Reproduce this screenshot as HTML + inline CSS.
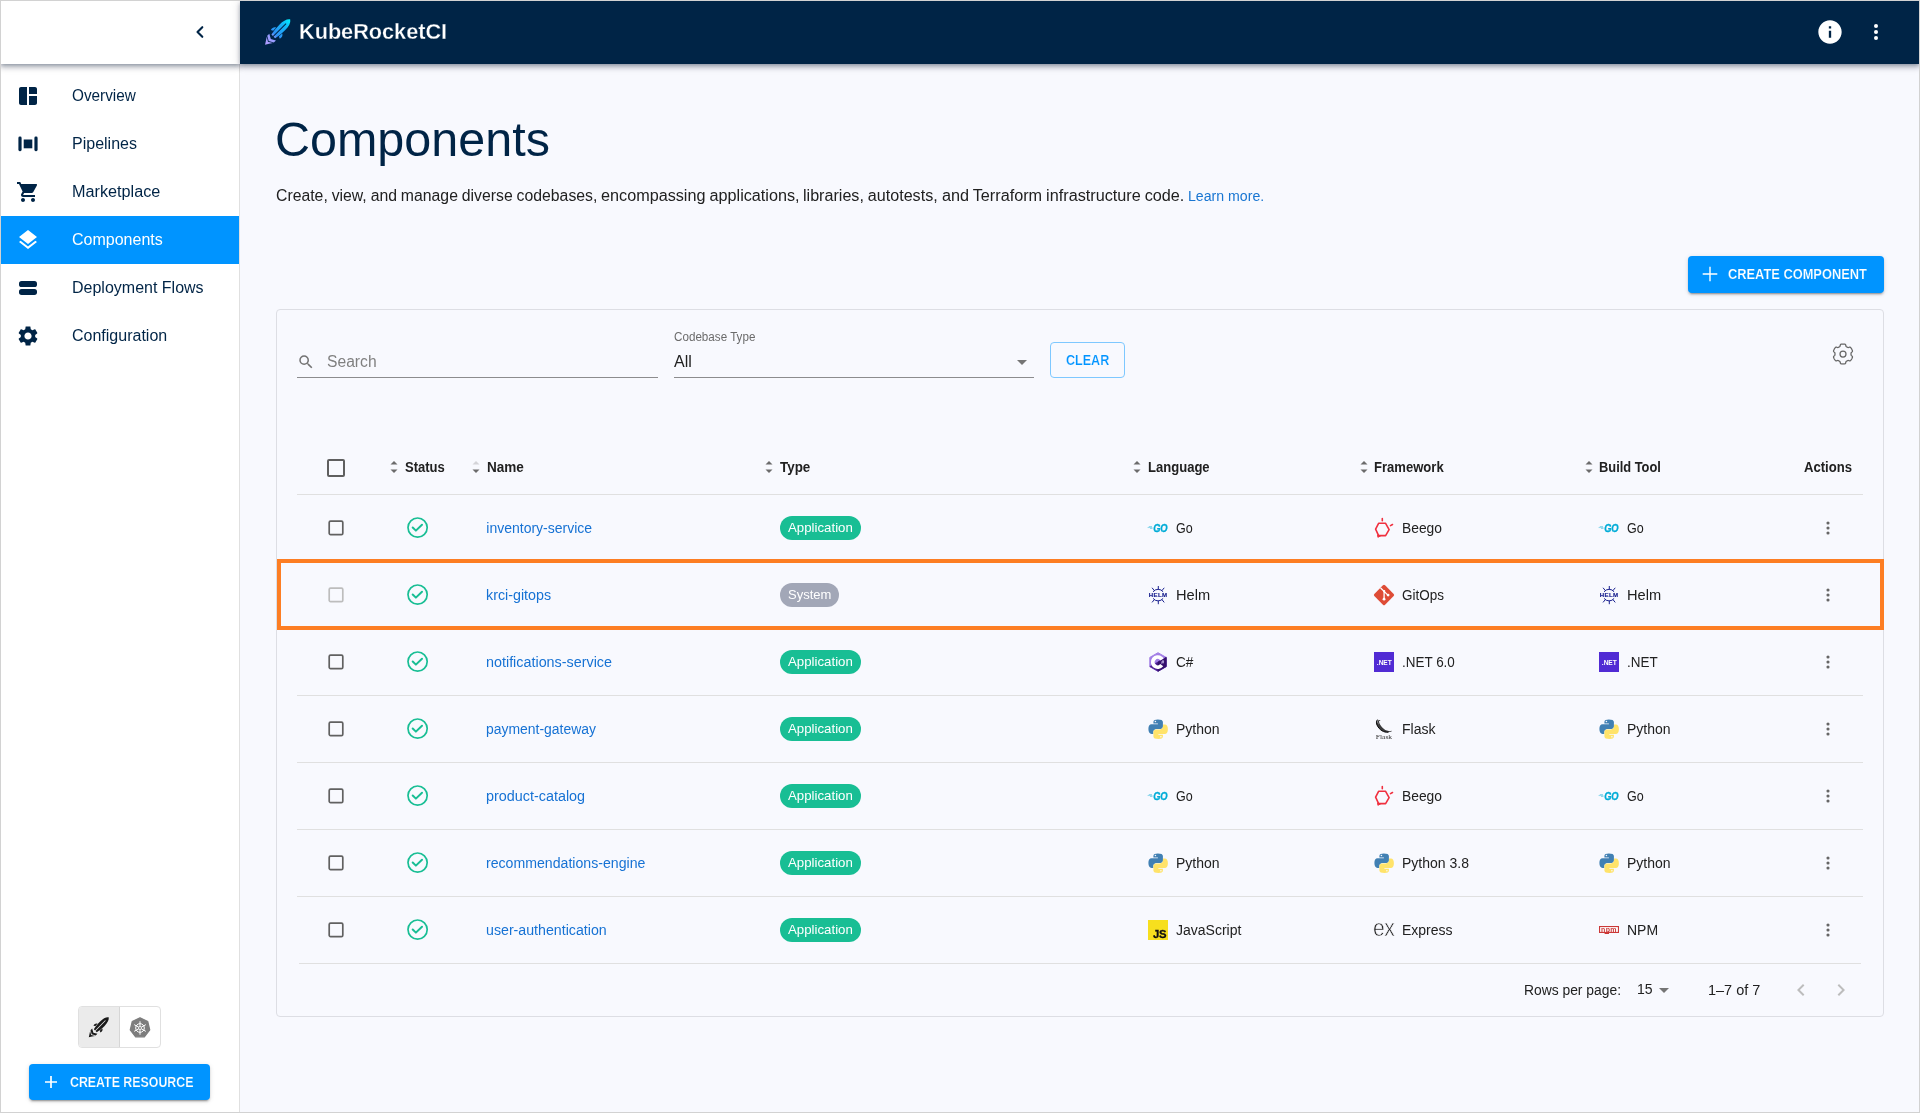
<!DOCTYPE html>
<html lang="en">
<head>
<meta charset="utf-8">
<title>KubeRocketCI - Components</title>
<style>
*{box-sizing:border-box;margin:0;padding:0}
html,body{width:1920px;height:1113px;overflow:hidden;background:#f8f9fe}
body{font-family:"Liberation Sans",sans-serif;color:#212121;-webkit-font-smoothing:antialiased}
#app{position:relative;width:1920px;height:1113px;overflow:hidden;background:#f8f9fe;will-change:transform}
.abs{position:absolute}
.t{position:absolute;white-space:nowrap;line-height:20px;transform-origin:0 50%;transform:scaleX(var(--k,1))}
/* sidebar */
.side{position:absolute;left:0;top:0;width:240px;height:1113px;background:#fff;border-right:1px solid #e0e0e0}
.sidehead{position:absolute;left:0;top:0;width:240px;height:64px;background:#fff;box-shadow:0 2px 4px -1px rgba(0,20,45,.3),0 4px 5px 0 rgba(0,20,45,.17),0 1px 10px 0 rgba(0,20,45,.13);z-index:3}
.nav{position:absolute;left:0;width:239px;height:48px}
.nav.active{background:#0094ff}
.nav .lbl{transform-origin:0 50%;transform:scaleX(var(--k,1));position:absolute;left:72px;top:14px;line-height:20px;font-size:16px;color:#002446;white-space:nowrap}
.nav.active .lbl{color:#fff}
.nav svg{position:absolute;left:16px;top:12px;width:24px;height:24px;fill:#002446}
.nav.active svg{fill:#fff}
/* topbar */
.top{position:absolute;left:240px;top:0;width:1680px;height:64px;background:#002446;box-shadow:0 2px 4px -1px rgba(0,20,45,.3),0 4px 5px 0 rgba(0,20,45,.17),0 1px 10px 0 rgba(0,20,45,.13);z-index:4}
/* main */
.card{position:absolute;left:276px;top:309px;width:1608px;height:708px;border:1px solid #dddee4;border-radius:4px;background:#f8f9fe}
.hl{position:absolute;left:277px;top:559px;width:1607px;height:71px;border:4px solid #fd7e23;z-index:5}
.hline{position:absolute;left:297px;width:1566px;height:1px;background:#e0e0e0}
.btn{position:absolute;background:#0094ff;color:#fff;border-radius:4px;font-weight:bold;font-size:14px;box-shadow:0 3px 1px -2px rgba(0,0,0,.2),0 2px 2px 0 rgba(0,0,0,.14),0 1px 5px 0 rgba(0,0,0,.12)}
.th{font-weight:bold;font-size:14px;color:#212121}
.td{font-size:14px;color:#212121}
.lnk{font-size:14px;color:#1672d4}
.chip{position:absolute;height:24px;border-radius:12px;background:#18be94;color:#fff;font-size:13px;line-height:24px;padding:0 8px;white-space:nowrap}
.chip.sys{background:#a2a7b7}
.cb{position:absolute;width:16px;height:16px;border:2px solid #5f5f5f;border-radius:2px}
.ic{position:absolute;overflow:visible}
.cb.dis{border-color:#bdbdbd}
.ds{top:186px;font-size:16px;color:#212121;word-spacing:-.5px}
.frame{position:absolute;left:0;top:0;width:1920px;height:1113px;border:1px solid #d2d2d2;z-index:20;pointer-events:none}
</style>
</head>
<body>
<div id="app">

<!-- SIDEBAR -->
<div class="side">
  <div class="sidehead">
    <svg class="abs" style="left:188px;top:20px" width="24" height="24" viewBox="0 0 24 24"><path fill="none" stroke="#002446" stroke-width="2.100" stroke-linecap="round" stroke-linejoin="round" d="M14.300 7.200 9.500 12l4.800 4.800"/></svg>
  </div>
  <div class="nav" style="top:72px"><svg viewBox="0 0 24 24"><path d="M11 21H5c-1.100 0-2-.9-2-2V5c0-1.100.9-2 2-2h6v18zm2 0h6c1.100 0 2-.9 2-2v-7h-8v9zm8-11V5c0-1.100-.9-2-2-2h-6v7h8z"/></svg><span class="lbl" style="--k:.957">Overview</span></div>
  <div class="nav" style="top:120px"><svg viewBox="0 0 24 24"><rect x="2.400" y="4.600" width="3.200" height="14.600" rx="1.400"/><rect x="7.700" y="7.500" width="8.600" height="8.800"/><rect x="18.400" y="4.600" width="3.200" height="14.600" rx="1.400"/></svg><span class="lbl">Pipelines</span></div>
  <div class="nav" style="top:168px"><svg viewBox="0 0 24 24"><path d="M7 18c-1.100 0-1.990.9-1.990 2S5.900 22 7 22s2-.9 2-2-.9-2-2-2zM1 2v2h2l3.600 7.590-1.350 2.450c-.16.280-.250.610-.250.960 0 1.100.9 2 2 2h12v-2H7.420c-.14 0-.250-.11-.250-.250l.030-.12.900-1.630h7.450c.750 0 1.410-.41 1.750-1.030l3.580-6.490A1.003 1.003 0 0 0 20 4H5.210l-.94-2H1zm16 16c-1.100 0-1.990.9-1.990 2s.89 2 1.990 2 2-.9 2-2-.9-2-2-2z"/></svg><span class="lbl" style="--k:1.014">Marketplace</span></div>
  <div class="nav active" style="top:216px;left:1px;width:238px"><svg viewBox="0 0 24 24" style="left:15px"><path d="m11.990 18.540-7.370-5.730L3 14.070l9 7 9-7-1.630-1.270-7.380 5.740zM12 16l7.360-5.730L21 9l-9-7-9 7 1.630 1.270L12 16z"/></svg><span class="lbl" style="left:71px">Components</span></div>
  <div class="nav" style="top:264px"><svg viewBox="0 0 24 24"><rect x="3" y="5.100" width="18" height="5.900" rx="2.600"/><rect x="3" y="13" width="18" height="5.900" rx="2.600"/></svg><span class="lbl">Deployment Flows</span></div>
  <div class="nav" style="top:312px"><svg viewBox="0 0 24 24"><path d="M19.140 12.940c.040-.3.060-.61.060-.94 0-.32-.020-.64-.070-.94l2.030-1.580c.18-.14.230-.41.120-.61l-1.920-3.320c-.12-.22-.37-.29-.59-.22l-2.390.96c-.5-.38-1.030-.7-1.620-.94l-.36-2.540c-.040-.24-.24-.41-.48-.41h-3.840c-.24 0-.43.170-.47.410l-.36 2.540c-.59.240-1.130.57-1.620.94l-2.390-.96c-.22-.080-.47 0-.59.220L2.740 8.870c-.12.210-.080.470.12.610l2.030 1.580c-.050.3-.090.630-.090.940s.020.640.070.94l-2.030 1.580c-.18.140-.23.410-.12.610l1.920 3.320c.12.220.37.290.59.220l2.390-.96c.5.380 1.030.7 1.620.94l.36 2.540c.050.240.24.410.48.410h3.840c.24 0 .44-.17.470-.41l.36-2.540c.59-.24 1.130-.56 1.620-.94l2.390.96c.22.080.47 0 .59-.22l1.920-3.320c.12-.22.070-.47-.12-.61l-2.010-1.580zM12 15.600c-1.980 0-3.600-1.620-3.600-3.600s1.620-3.600 3.600-3.600 3.600 1.620 3.600 3.600-1.620 3.600-3.600 3.600z"/></svg><span class="lbl">Configuration</span></div>
  <div class="abs" style="left:78px;top:1006px;width:83px;height:42px;border:1px solid #e0e0e0;border-radius:4px;background:#fff;overflow:hidden">
    <div class="abs" style="left:0;top:0;width:41px;height:40px;background:#ebebeb;border-right:1px solid #d6d6d6"></div>
    <svg class="abs" style="left:0;top:0" width="40" height="40" viewBox="0 0 40 40"><g transform="translate(20 20) rotate(45) scale(.79)"><path fill="#1a1a1a" d="M0-17.400C2.600-15.600 4-11.500 4-6C4-1 3.300 3.500 2.600 6.600H.5V-11.500H-.5V6.600H-2.600C-3.300 3.500-4-1-4-6C-4-11.500-2.600-15.600 0-17.400zM-4.300-1.700C-6.300-1-6.900 1.400-6.300 3.700L-4 2.700zM4.300-1.700C6.300-1 6.900 1.400 6.300 3.700L4 2.700zM-4.700 7.500L0 10.100 4.700 7.500V10.500L0 13.100-4.700 10.500zM-4.400 11.500L0 14.100 4.400 11.500 2.200 14.800 0 18.250-2.200 14.800z"/></g></svg>
    <svg class="abs" style="left:50px;top:10px" width="22" height="22" viewBox="0 0 22 22"><path fill="#7d7d7d" d="M11 .8l7.800 3.750 1.950 8.450-5.400 6.800H6.650l-5.400-6.800L3.200 4.550z" stroke="#7d7d7d" stroke-width="1.200" stroke-linejoin="round"/><g fill="none" stroke="#fff" stroke-width="1"><circle cx="11" cy="11" r="4.300"/><path d="M11 4.300v13.400M5.200 7.650l11.600 6.700M5.200 14.350l11.600-6.700"/></g><circle cx="11" cy="11" r="1.500" fill="#7d7d7d" stroke="#fff" stroke-width=".8"/></svg>
  </div>
  <div class="btn" style="left:29px;top:1064px;width:181px;height:36px">
    <svg class="abs" style="left:12px;top:8px" width="20" height="20" viewBox="0 0 20 20"><path d="M10 4v12M4 10h12" stroke="#fff" stroke-width="1.700" fill="none"/></svg>
    <span class="t" style="left:40.800px;top:8px;font-size:14px;-webkit-text-stroke:.2px #0094ff;--k:.883">CREATE RESOURCE</span>
  </div>
</div>

<!-- TOPBAR -->
<div class="top">
  <svg class="abs" style="left:17px;top:12px" width="40" height="40" viewBox="0 0 40 40">
    <defs><linearGradient id="rg" x1="0" y1="1" x2="0" y2="0"><stop offset="0" stop-color="#b69cff"/><stop offset=".32" stop-color="#8f9dff"/><stop offset=".4" stop-color="#2f8ff5"/><stop offset=".75" stop-color="#12b5f7"/><stop offset="1" stop-color="#00f0ff"/></linearGradient></defs>
    <g transform="translate(20.950 19.750) rotate(45)">
      <path fill="url(#rg)" d="M0-17.400C2.600-15.600 4-11.500 4-6C4-1 3.300 3.500 2.600 6.600H.5V-11.500H-.5V6.600H-2.600C-3.300 3.500-4-1-4-6C-4-11.500-2.600-15.600 0-17.400zM-4.300-1.700C-6.300-1-6.900 1.400-6.300 3.700L-4 2.700zM4.300-1.700C6.300-1 6.900 1.400 6.300 3.700L4 2.700zM-4.700 7.500L0 10.100 4.700 7.500V10.500L0 13.100-4.700 10.500zM-4.400 11.500L0 14.100 4.400 11.500 2.200 14.800 0 18.250-2.200 14.800z"/>
    </g>
  </svg>
  <span class="t" style="left:58.500px;top:20px;font-size:22px;line-height:24px;color:#fff;font-weight:bold;-webkit-text-stroke:.3px #002446;--k:.985">KubeRocketCI</span>
  <svg class="abs" style="left:1576px;top:18px" width="28" height="28" viewBox="0 0 24 24"><path fill="#fff" d="M12 2C6.480 2 2 6.480 2 12s4.480 10 10 10 10-4.480 10-10S17.520 2 12 2zm1 15h-2v-6h2v6zm0-8h-2V7h2v2z"/></svg>
  <svg class="abs" style="left:1624px;top:20px" width="24" height="24" viewBox="0 0 24 24" fill="#fff"><circle cx="12" cy="6" r="2"/><circle cx="12" cy="12" r="2"/><circle cx="12" cy="18" r="2"/></svg>
</div>

<!-- MAIN -->
<div class="t" style="left:274.700px;top:112px;font-size:48px;line-height:56px;color:#002446;--k:1.01">Components</div>
<div class="t ds" id="dA" style="left:276.00px;--k:0.9866">Create, view, and manage diverse codebases,</div>
<div class="t ds" id="dB" style="left:601.30px;--k:1.0128">encompassing applications,</div>
<div class="t ds" id="dC" style="left:802.60px;--k:1.0067">libraries, autotests,</div>
<div class="t ds" id="dD" style="left:942.12px;--k:1.0132">and Terraform infrastructure code.</div>
<div class="t" style="left:1188px;top:186px;font-size:14px;color:#1976d2;--k:1.01">Learn more.</div>


<!-- CREATE COMPONENT -->
<div class="btn" style="left:1688px;top:256px;width:196px;height:37px">
  <svg class="abs" style="left:12px;top:8px" width="20" height="20" viewBox="0 0 20 20"><path d="M10 2.700v14.600M2.700 10h14.600" stroke="#fff" stroke-width="1.400" fill="none"/></svg>
  <span class="t" style="left:40px;top:8px;font-size:14px;-webkit-text-stroke:.2px #0094ff;--k:.917">CREATE COMPONENT</span>
</div>

<div class="card"></div>

<!-- FILTER -->
<svg class="abs" style="left:297px;top:353px" width="18" height="18" viewBox="0 0 24 24"><path fill="#737373" d="M15.500 14h-.79l-.28-.27A6.471 6.471 0 0 0 16 9.500 6.500 6.500 0 1 0 9.500 16c1.610 0 3.090-.59 4.230-1.570l.27.28v.79l5 4.990L20.490 19l-4.990-5zm-6 0C7.010 14 5 11.990 5 9.500S7.010 5 9.500 5 14 7.010 14 9.500 11.990 14 9.500 14z"/></svg>
<div class="t" style="left:326.500px;top:352.300px;font-size:16px;color:#808080;--k:.978">Search</div>
<div class="abs" style="left:297px;top:377px;width:361px;height:1px;background:#8c8c8e"></div>
<div class="t" style="left:674px;top:327px;font-size:12px;color:#6b6b6b;--k:.971">Codebase Type</div>
<div class="t" style="left:674px;top:352px;font-size:16px;color:#212121">All</div>
<svg class="abs" style="left:1017px;top:359.500px" width="10" height="5" viewBox="0 0 10 5"><path d="M0 0h10L5 5z" fill="#757575"/></svg>
<div class="abs" style="left:674px;top:377px;width:360px;height:1px;background:#8c8c8e"></div>
<div class="abs" style="left:1050px;top:342px;width:75px;height:36px;border:1px solid #7ec8ff;border-radius:4px"></div>
<div class="t" style="left:1066px;top:350px;font-size:14px;font-weight:bold;color:#0094ff;-webkit-text-stroke:.2px #f8f9fe;--k:.896">CLEAR</div>
<svg class="abs" style="left:1831px;top:342px" width="24" height="24" viewBox="0 0 24 24" fill="none" stroke="#666" stroke-width="1.250" stroke-linejoin="round"><path d="M12.00,2.00 L12.17,2.00 L12.35,2.01 L12.52,2.01 L12.70,2.03 L12.87,2.04 L13.05,2.06 L13.22,2.08 L13.39,2.10 L13.56,2.13 L13.73,2.17 L13.90,2.21 L14.07,2.27 L14.23,2.34 L14.38,2.45 L14.51,2.61 L14.63,2.84 L14.71,3.14 L14.77,3.47 L14.83,3.78 L14.89,4.05 L14.98,4.25 L15.07,4.40 L15.18,4.52 L15.29,4.61 L15.41,4.69 L15.53,4.77 L15.65,4.84 L15.77,4.91 L15.89,4.98 L16.01,5.05 L16.14,5.12 L16.26,5.19 L16.38,5.26 L16.50,5.33 L16.63,5.39 L16.76,5.45 L16.89,5.51 L17.05,5.54 L17.22,5.55 L17.44,5.52 L17.70,5.44 L18.00,5.33 L18.32,5.22 L18.62,5.15 L18.87,5.13 L19.08,5.17 L19.25,5.24 L19.39,5.34 L19.53,5.46 L19.65,5.58 L19.76,5.71 L19.88,5.85 L19.98,5.98 L20.09,6.12 L20.19,6.27 L20.29,6.41 L20.39,6.55 L20.48,6.70 L20.57,6.85 L20.66,7.00 L20.75,7.15 L20.83,7.31 L20.91,7.46 L20.99,7.62 L21.06,7.77 L21.13,7.93 L21.20,8.09 L21.27,8.26 L21.33,8.42 L21.38,8.59 L21.43,8.75 L21.46,8.93 L21.48,9.10 L21.46,9.29 L21.39,9.49 L21.24,9.70 L21.03,9.91 L20.78,10.13 L20.53,10.34 L20.33,10.53 L20.20,10.70 L20.12,10.86 L20.07,11.01 L20.05,11.15 L20.03,11.30 L20.03,11.44 L20.03,11.58 L20.03,11.72 L20.03,11.86 L20.03,12.00 L20.03,12.14 L20.03,12.28 L20.03,12.42 L20.03,12.56 L20.03,12.70 L20.05,12.85 L20.07,12.99 L20.12,13.14 L20.20,13.30 L20.33,13.47 L20.53,13.66 L20.78,13.87 L21.03,14.09 L21.24,14.30 L21.39,14.51 L21.46,14.71 L21.48,14.90 L21.46,15.07 L21.43,15.25 L21.38,15.41 L21.33,15.58 L21.27,15.74 L21.20,15.91 L21.13,16.07 L21.06,16.23 L20.99,16.38 L20.91,16.54 L20.83,16.69 L20.75,16.85 L20.66,17.00 L20.57,17.15 L20.48,17.30 L20.39,17.45 L20.29,17.59 L20.19,17.73 L20.09,17.88 L19.98,18.02 L19.88,18.15 L19.76,18.29 L19.65,18.42 L19.53,18.54 L19.39,18.66 L19.25,18.76 L19.08,18.83 L18.87,18.87 L18.62,18.85 L18.32,18.78 L18.00,18.67 L17.70,18.56 L17.44,18.48 L17.22,18.45 L17.05,18.46 L16.89,18.49 L16.76,18.55 L16.63,18.61 L16.50,18.67 L16.38,18.74 L16.26,18.81 L16.14,18.88 L16.01,18.95 L15.89,19.02 L15.77,19.09 L15.65,19.16 L15.53,19.23 L15.41,19.31 L15.29,19.39 L15.18,19.48 L15.07,19.60 L14.98,19.75 L14.89,19.95 L14.83,20.22 L14.77,20.53 L14.71,20.86 L14.63,21.16 L14.51,21.39 L14.38,21.55 L14.23,21.66 L14.07,21.73 L13.90,21.79 L13.73,21.83 L13.56,21.87 L13.39,21.90 L13.22,21.92 L13.05,21.94 L12.87,21.96 L12.70,21.97 L12.52,21.99 L12.35,21.99 L12.17,22.00 L12.00,22.00 L11.83,22.00 L11.65,21.99 L11.48,21.99 L11.30,21.97 L11.13,21.96 L10.95,21.94 L10.78,21.92 L10.61,21.90 L10.44,21.87 L10.27,21.83 L10.10,21.79 L9.93,21.73 L9.77,21.66 L9.62,21.55 L9.49,21.39 L9.37,21.16 L9.29,20.86 L9.23,20.53 L9.17,20.22 L9.11,19.95 L9.02,19.75 L8.93,19.60 L8.82,19.48 L8.71,19.39 L8.59,19.31 L8.47,19.23 L8.35,19.16 L8.23,19.09 L8.11,19.02 L7.99,18.95 L7.86,18.88 L7.74,18.81 L7.62,18.74 L7.50,18.67 L7.37,18.61 L7.24,18.55 L7.11,18.49 L6.95,18.46 L6.78,18.45 L6.56,18.48 L6.30,18.56 L6.00,18.67 L5.68,18.78 L5.38,18.85 L5.13,18.87 L4.92,18.83 L4.75,18.76 L4.61,18.66 L4.47,18.54 L4.35,18.42 L4.24,18.29 L4.12,18.15 L4.02,18.02 L3.91,17.88 L3.81,17.73 L3.71,17.59 L3.61,17.45 L3.52,17.30 L3.43,17.15 L3.34,17.00 L3.25,16.85 L3.17,16.69 L3.09,16.54 L3.01,16.38 L2.94,16.23 L2.87,16.07 L2.80,15.91 L2.73,15.74 L2.67,15.58 L2.62,15.41 L2.57,15.25 L2.54,15.07 L2.52,14.90 L2.54,14.71 L2.61,14.51 L2.76,14.30 L2.97,14.09 L3.22,13.87 L3.47,13.66 L3.67,13.47 L3.80,13.30 L3.88,13.14 L3.93,12.99 L3.95,12.85 L3.97,12.70 L3.97,12.56 L3.97,12.42 L3.97,12.28 L3.97,12.14 L3.97,12.00 L3.97,11.86 L3.97,11.72 L3.97,11.58 L3.97,11.44 L3.97,11.30 L3.95,11.15 L3.93,11.01 L3.88,10.86 L3.80,10.70 L3.67,10.53 L3.47,10.34 L3.22,10.13 L2.97,9.91 L2.76,9.70 L2.61,9.49 L2.54,9.29 L2.52,9.10 L2.54,8.93 L2.57,8.75 L2.62,8.59 L2.67,8.42 L2.73,8.26 L2.80,8.09 L2.87,7.93 L2.94,7.77 L3.01,7.62 L3.09,7.46 L3.17,7.31 L3.25,7.15 L3.34,7.00 L3.43,6.85 L3.52,6.70 L3.61,6.55 L3.71,6.41 L3.81,6.27 L3.91,6.12 L4.02,5.98 L4.12,5.85 L4.24,5.71 L4.35,5.58 L4.47,5.46 L4.61,5.34 L4.75,5.24 L4.92,5.17 L5.13,5.13 L5.38,5.15 L5.68,5.22 L6.00,5.33 L6.30,5.44 L6.56,5.52 L6.78,5.55 L6.95,5.54 L7.11,5.51 L7.24,5.45 L7.37,5.39 L7.50,5.33 L7.62,5.26 L7.74,5.19 L7.86,5.12 L7.99,5.05 L8.11,4.98 L8.23,4.91 L8.35,4.84 L8.47,4.77 L8.59,4.69 L8.71,4.61 L8.82,4.52 L8.93,4.40 L9.02,4.25 L9.11,4.05 L9.17,3.78 L9.23,3.47 L9.29,3.14 L9.37,2.84 L9.49,2.61 L9.62,2.45 L9.77,2.34 L9.93,2.27 L10.10,2.21 L10.27,2.17 L10.44,2.13 L10.61,2.10 L10.78,2.08 L10.95,2.06 L11.13,2.04 L11.30,2.03 L11.48,2.01 L11.65,2.01 L11.83,2.00Z"/><circle cx="12" cy="12" r="3"/></svg>

<!-- TABLE HEAD -->
<div class="cb" style="left:327px;top:459px;width:18px;height:18px"></div>
<svg class="abs" style="left:390px;top:460px" width="8" height="14" viewBox="0 0 8 14"><path d="M.5 4.500L4 1l3.500 3.500z" fill="#6b6b6b"/><path d="M.5 9.500L4 13l3.500-3.500z" fill="#6b6b6b"/></svg>
<div class="t th" style="left:405px;top:457px;--k:0.93">Status</div>
<svg class="abs" style="left:472px;top:460px" width="8" height="14" viewBox="0 0 8 14"><path d="M.5 4.500L4 1l3.500 3.500z" fill="#d4d4d8"/><path d="M.5 9.500L4 13l3.500-3.500z" fill="#6b6b6b"/></svg>
<div class="t th" style="left:487px;top:457px;--k:0.968">Name</div>
<svg class="abs" style="left:765px;top:460px" width="8" height="14" viewBox="0 0 8 14"><path d="M.5 4.500L4 1l3.500 3.500z" fill="#6b6b6b"/><path d="M.5 9.500L4 13l3.500-3.500z" fill="#6b6b6b"/></svg>
<div class="t th" style="left:780px;top:457px;--k:0.958">Type</div>
<svg class="abs" style="left:1133px;top:460px" width="8" height="14" viewBox="0 0 8 14"><path d="M.5 4.500L4 1l3.500 3.500z" fill="#6b6b6b"/><path d="M.5 9.500L4 13l3.500-3.500z" fill="#6b6b6b"/></svg>
<div class="t th" style="left:1148px;top:457px;--k:0.932">Language</div>
<svg class="abs" style="left:1360px;top:460px" width="8" height="14" viewBox="0 0 8 14"><path d="M.5 4.500L4 1l3.500 3.500z" fill="#6b6b6b"/><path d="M.5 9.500L4 13l3.500-3.500z" fill="#6b6b6b"/></svg>
<div class="t th" style="left:1374px;top:457px;--k:0.933">Framework</div>
<svg class="abs" style="left:1585px;top:460px" width="8" height="14" viewBox="0 0 8 14"><path d="M.5 4.500L4 1l3.500 3.500z" fill="#6b6b6b"/><path d="M.5 9.500L4 13l3.500-3.500z" fill="#6b6b6b"/></svg>
<div class="t th" style="left:1599px;top:457px;--k:0.918">Build Tool</div>
<div class="t th" style="left:1804px;top:457px;--k:.935">Actions</div>
<div class="hline" style="top:494px"></div>
<!-- TABLE ROWS -->
<svg class="abs" style="left:328px;top:520px" width="16" height="16" viewBox="0 0 16 16"><rect x="1.200" y="1.100" width="13.600" height="13.500" rx="1.400" fill="none" stroke="#616161" stroke-width="1.700"/></svg>
<svg class="abs" style="left:406px;top:516px" width="24" height="24" viewBox="0 0 24 24" fill="none" stroke="#18be94" stroke-width="1.700"><circle cx="11.600" cy="11.600" r="9.600"/><path d="M6.700 11.500l3.200 3.100 6.100-5.900" stroke-width="2" stroke-linecap="round" stroke-linejoin="round"/></svg>
<div class="t lnk" style="left:486.300px;top:518.3px;--k:1.0">inventory-service</div>
<div class="chip" style="left:780px;top:516px;width:81px"><span class="t" style="position:relative;display:inline-block;line-height:24px;--k:1.02">Application</span></div>
<svg class="ic" style="left:1148px;top:518px" width="20" height="20" viewBox="0 0 20 20"><g fill="none" stroke="#00acd7" stroke-width=".6" stroke-linecap="round" opacity=".7"><path d="M1.200 8.500h2.400M0 9.550h4M2.400 10.500h1.700"/></g><text transform="translate(5.300 13.900) scale(.86 1)" font-family="Liberation Sans, sans-serif" font-weight="bold" font-style="italic" font-size="10.900" letter-spacing="-.5" fill="#00acd7" stroke="#00acd7" stroke-width=".3">GO</text></svg>
<div class="t td" style="left:1176px;top:518px;--k:0.895">Go</div>
<svg class="ic" style="left:1374px;top:518px" width="20" height="20" viewBox="0 0 20 20"><g fill="none" stroke="#f0303f" stroke-width="1.600" stroke-linecap="round" stroke-linejoin="round"><path d="M4.600 5.300h7L15.100 11.600 11.600 17.600h-7L1.600 11.200z"/><path d="M8.300.6v2.100M16.500 7.600l2-1.100"/><path d="M3.700 17.300l.2 2 2.400-1.300z" fill="#f0303f" stroke-width="1"/></g></svg>
<div class="t td" style="left:1402px;top:518px;--k:0.987">Beego</div>
<svg class="ic" style="left:1599px;top:518px" width="20" height="20" viewBox="0 0 20 20"><g fill="none" stroke="#00acd7" stroke-width=".6" stroke-linecap="round" opacity=".7"><path d="M1.200 8.500h2.400M0 9.550h4M2.400 10.500h1.700"/></g><text transform="translate(5.300 13.900) scale(.86 1)" font-family="Liberation Sans, sans-serif" font-weight="bold" font-style="italic" font-size="10.900" letter-spacing="-.5" fill="#00acd7" stroke="#00acd7" stroke-width=".3">GO</text></svg>
<div class="t td" style="left:1627px;top:518px;--k:0.895">Go</div>
<svg class="abs" style="left:1818px;top:518px" width="20" height="20" viewBox="0 0 24 24" fill="#666"><circle cx="12" cy="6" r="1.900"/><circle cx="12" cy="12" r="1.900"/><circle cx="12" cy="18" r="1.900"/></svg>
<div class="hline" style="top:561px"></div>
<svg class="abs" style="left:328px;top:587px" width="16" height="16" viewBox="0 0 16 16"><rect x="1.200" y="1.100" width="13.600" height="13.500" rx="1.400" fill="none" stroke="#bdbdbd" stroke-width="1.700"/></svg>
<svg class="abs" style="left:406px;top:583px" width="24" height="24" viewBox="0 0 24 24" fill="none" stroke="#18be94" stroke-width="1.700"><circle cx="11.600" cy="11.600" r="9.600"/><path d="M6.700 11.500l3.200 3.100 6.100-5.900" stroke-width="2" stroke-linecap="round" stroke-linejoin="round"/></svg>
<div class="t lnk" style="left:486.300px;top:585.3px;--k:1.02">krci-gitops</div>
<div class="chip sys" style="left:780px;top:583px;width:59px"><span class="t" style="position:relative;display:inline-block;line-height:24px;--k:1.0">System</span></div>
<svg class="ic" style="left:1148px;top:585px" width="20" height="20" viewBox="0 0 20 20"><g fill="none" stroke="#0f1689" stroke-width=".95" stroke-linecap="round"><path d="M5.300 6.500a6 6 0 0 1 9.600 0M5.300 13.700a6 6 0 0 0 9.600 0"/><path d="M10.300 1.400v2.700M4.300 3.100l1.800 2.200M16 3.100l-1.800 2.200M10.300 18.800v-2.700M4.300 17.100l1.800-2.200M16 17.100l-1.800-2.200"/></g><text x="10.100" y="12.350" text-anchor="middle" font-family="Liberation Sans, sans-serif" font-weight="bold" font-size="6.100" letter-spacing=".3" fill="#0f1689" stroke="#0f1689" stroke-width=".12">HELM</text></svg>
<div class="t td" style="left:1176px;top:585px;--k:1.045">Helm</div>
<svg class="ic" style="left:1374px;top:585px" width="20" height="20" viewBox="0 0 20 20"><rect x="2.400" y="2.400" width="15.200" height="15.200" rx="1.500" fill="#de4c36" transform="rotate(45 10 10)"/><g fill="none" stroke="#fff" stroke-width="1.300" stroke-linecap="round"><path d="M6.900 3.200L10.100 6.400M10.100 6v8M10.100 6.400l3.800 3.700"/></g><g fill="#fff"><circle cx="10.100" cy="6.100" r="1.200"/><circle cx="10.050" cy="14.200" r="1.400"/><circle cx="14.100" cy="10.100" r="1.400"/></g></svg>
<div class="t td" style="left:1402px;top:585px;--k:0.963">GitOps</div>
<svg class="ic" style="left:1599px;top:585px" width="20" height="20" viewBox="0 0 20 20"><g fill="none" stroke="#0f1689" stroke-width=".95" stroke-linecap="round"><path d="M5.300 6.500a6 6 0 0 1 9.600 0M5.300 13.700a6 6 0 0 0 9.600 0"/><path d="M10.300 1.400v2.700M4.300 3.100l1.800 2.200M16 3.100l-1.800 2.200M10.300 18.800v-2.700M4.300 17.100l1.800-2.200M16 17.100l-1.800-2.200"/></g><text x="10.100" y="12.350" text-anchor="middle" font-family="Liberation Sans, sans-serif" font-weight="bold" font-size="6.100" letter-spacing=".3" fill="#0f1689" stroke="#0f1689" stroke-width=".12">HELM</text></svg>
<div class="t td" style="left:1627px;top:585px;--k:1.045">Helm</div>
<svg class="abs" style="left:1818px;top:585px" width="20" height="20" viewBox="0 0 24 24" fill="#666"><circle cx="12" cy="6" r="1.900"/><circle cx="12" cy="12" r="1.900"/><circle cx="12" cy="18" r="1.900"/></svg>
<div class="hline" style="top:628px"></div>
<svg class="abs" style="left:328px;top:654px" width="16" height="16" viewBox="0 0 16 16"><rect x="1.200" y="1.100" width="13.600" height="13.500" rx="1.400" fill="none" stroke="#616161" stroke-width="1.700"/></svg>
<svg class="abs" style="left:406px;top:650px" width="24" height="24" viewBox="0 0 24 24" fill="none" stroke="#18be94" stroke-width="1.700"><circle cx="11.600" cy="11.600" r="9.600"/><path d="M6.700 11.500l3.200 3.100 6.100-5.900" stroke-width="2" stroke-linecap="round" stroke-linejoin="round"/></svg>
<div class="t lnk" style="left:486.300px;top:652.3px;--k:1.025">notifications-service</div>
<div class="chip" style="left:780px;top:650px;width:81px"><span class="t" style="position:relative;display:inline-block;line-height:24px;--k:1.02">Application</span></div>
<svg class="ic" style="left:1148px;top:652px" width="20" height="20" viewBox="0 0 20 20"><g stroke-linejoin="round" stroke-width="1"><path d="M10 .7l8.200 4.700v9.200L10 19.300 1.800 14.600V5.400z" fill="#a27ee6" stroke="#a27ee6"/><path d="M18.200 5.400v9.200L10 19.300 1.800 14.600z" fill="#4b1d8f" stroke="#4b1d8f" stroke-width=".6"/><path d="M18.200 5.400v9.200L10 19.300V10z" fill="#34106b" stroke="#34106b" stroke-width=".6"/></g><circle cx="9.800" cy="10.100" r="5" fill="none" stroke="#fff" stroke-width="3.800" stroke-dasharray="24.800 40" transform="rotate(38 9.800 10.100)"/><text x="13.300" y="12" font-family="Liberation Sans, sans-serif" font-weight="bold" font-size="5.200" fill="#d9ccf5">#</text></svg>
<div class="t td" style="left:1176px;top:652px;--k:0.97">C#</div>
<svg class="ic" style="left:1374px;top:652px" width="20" height="20" viewBox="0 0 20 20"><rect width="20" height="20" fill="#512bd4"/><text transform="translate(10.250 13.050) scale(.9 1)" text-anchor="middle" font-family="Liberation Sans, sans-serif" font-weight="bold" font-size="7.400" letter-spacing="-.1" fill="#fff">.NET</text></svg>
<div class="t td" style="left:1402px;top:652px;--k:0.961">.NET 6.0</div>
<svg class="ic" style="left:1599px;top:652px" width="20" height="20" viewBox="0 0 20 20"><rect width="20" height="20" fill="#512bd4"/><text transform="translate(10.250 13.050) scale(.9 1)" text-anchor="middle" font-family="Liberation Sans, sans-serif" font-weight="bold" font-size="7.400" letter-spacing="-.1" fill="#fff">.NET</text></svg>
<div class="t td" style="left:1627px;top:652px;--k:0.961">.NET</div>
<svg class="abs" style="left:1818px;top:652px" width="20" height="20" viewBox="0 0 24 24" fill="#666"><circle cx="12" cy="6" r="1.900"/><circle cx="12" cy="12" r="1.900"/><circle cx="12" cy="18" r="1.900"/></svg>
<div class="hline" style="top:695px"></div>
<svg class="abs" style="left:328px;top:721px" width="16" height="16" viewBox="0 0 16 16"><rect x="1.200" y="1.100" width="13.600" height="13.500" rx="1.400" fill="none" stroke="#616161" stroke-width="1.700"/></svg>
<svg class="abs" style="left:406px;top:717px" width="24" height="24" viewBox="0 0 24 24" fill="none" stroke="#18be94" stroke-width="1.700"><circle cx="11.600" cy="11.600" r="9.600"/><path d="M6.700 11.500l3.200 3.100 6.100-5.900" stroke-width="2" stroke-linecap="round" stroke-linejoin="round"/></svg>
<div class="t lnk" style="left:486.300px;top:719.3px;--k:0.995">payment-gateway</div>
<div class="chip" style="left:780px;top:717px;width:81px"><span class="t" style="position:relative;display:inline-block;line-height:24px;--k:1.02">Application</span></div>
<svg class="ic" style="left:1148px;top:719px" width="20" height="20" viewBox="0 0 20 20"><path fill="#4180b3" d="M9.800.4C7.300.4 5.400 1.100 5.400 2.900v1.700h4.500v.7H3.500C1.500 5.300.4 7.200.4 10.100s1.100 4.800 3.100 4.800h1.800v-1.900c0-1.800 1.400-3.100 3.100-3.100h4c1.400 0 2.500-1.100 2.500-2.500V2.900c0-1.700-1.800-2.500-5.100-2.500z"/><circle cx="7.400" cy="2.500" r=".8" fill="#f8f9fe"/><g transform="rotate(180 10.150 10.150)"><path fill="#ffe36a" d="M9.800.4C7.300.4 5.400 1.100 5.400 2.900v1.700h4.500v.7H3.500C1.500 5.300.4 7.200.4 10.100s1.100 4.800 3.100 4.800h1.800v-1.900c0-1.800 1.400-3.100 3.100-3.100h4c1.400 0 2.500-1.100 2.500-2.500V2.900c0-1.700-1.800-2.500-5.100-2.500z"/><circle cx="7.400" cy="2.500" r=".8" fill="#f8f9fe"/></g></svg>
<div class="t td" style="left:1176px;top:719px;--k:1">Python</div>
<svg class="ic" style="left:1374px;top:719px" width="20" height="20" viewBox="0 0 20 20"><g transform="translate(-.6 -.7)"><path d="M3.700 1.300c-.9 1.100-1.100 2.600-.6 4.300.8 2.700 3 5.400 5.700 7 2.100 1.200 4.600 1.700 7.300 1.200.9-.2 1.700-.5 2.300-.9l-.2-.4c-.9.300-1.900.4-2.900.3-2.400-.3-4.600-1.500-6.400-3.500C7.100 7.400 5.900 5.200 5.500 3l1.500-.6-.4-.6-1.600.5-.5-1.300-.6.200.3 1.200-.9.400.2.500.9-.3c.2 1.300.6 2.500 1.200 3.700-.8-1.100-1.400-2.300-1.700-3.500-.2-.7-.2-1.300-.2-1.900z" fill="#111" fill-opacity=".82"/><path d="M3.300 2.600c-.5 1.300-.3 2.700.3 4.100 1 2.400 2.900 4.500 5.200 5.900 1.700 1 3.700 1.500 5.800 1.400" fill="none" stroke="#000" stroke-width=".9" stroke-linecap="round"/></g><text transform="translate(9.950 19.850) scale(1.2 1)" text-anchor="middle" font-family="Liberation Serif, serif" font-size="6.300" fill="#333">Flask</text></svg>
<div class="t td" style="left:1402px;top:719px;--k:1">Flask</div>
<svg class="ic" style="left:1599px;top:719px" width="20" height="20" viewBox="0 0 20 20"><path fill="#4180b3" d="M9.800.4C7.300.4 5.400 1.100 5.400 2.900v1.700h4.500v.7H3.500C1.500 5.300.4 7.200.4 10.100s1.100 4.800 3.100 4.800h1.800v-1.900c0-1.800 1.400-3.100 3.100-3.100h4c1.400 0 2.500-1.100 2.500-2.500V2.900c0-1.700-1.800-2.500-5.100-2.500z"/><circle cx="7.400" cy="2.500" r=".8" fill="#f8f9fe"/><g transform="rotate(180 10.150 10.150)"><path fill="#ffe36a" d="M9.800.4C7.300.4 5.400 1.100 5.400 2.900v1.700h4.500v.7H3.500C1.500 5.300.4 7.200.4 10.100s1.100 4.800 3.100 4.800h1.800v-1.900c0-1.800 1.400-3.100 3.100-3.100h4c1.400 0 2.500-1.100 2.500-2.500V2.900c0-1.700-1.800-2.500-5.100-2.500z"/><circle cx="7.400" cy="2.500" r=".8" fill="#f8f9fe"/></g></svg>
<div class="t td" style="left:1627px;top:719px;--k:1">Python</div>
<svg class="abs" style="left:1818px;top:719px" width="20" height="20" viewBox="0 0 24 24" fill="#666"><circle cx="12" cy="6" r="1.900"/><circle cx="12" cy="12" r="1.900"/><circle cx="12" cy="18" r="1.900"/></svg>
<div class="hline" style="top:762px"></div>
<svg class="abs" style="left:328px;top:788px" width="16" height="16" viewBox="0 0 16 16"><rect x="1.200" y="1.100" width="13.600" height="13.500" rx="1.400" fill="none" stroke="#616161" stroke-width="1.700"/></svg>
<svg class="abs" style="left:406px;top:784px" width="24" height="24" viewBox="0 0 24 24" fill="none" stroke="#18be94" stroke-width="1.700"><circle cx="11.600" cy="11.600" r="9.600"/><path d="M6.700 11.500l3.200 3.100 6.100-5.900" stroke-width="2" stroke-linecap="round" stroke-linejoin="round"/></svg>
<div class="t lnk" style="left:486.300px;top:786.3px;--k:1.027">product-catalog</div>
<div class="chip" style="left:780px;top:784px;width:81px"><span class="t" style="position:relative;display:inline-block;line-height:24px;--k:1.02">Application</span></div>
<svg class="ic" style="left:1148px;top:786px" width="20" height="20" viewBox="0 0 20 20"><g fill="none" stroke="#00acd7" stroke-width=".6" stroke-linecap="round" opacity=".7"><path d="M1.200 8.500h2.400M0 9.550h4M2.400 10.500h1.700"/></g><text transform="translate(5.300 13.900) scale(.86 1)" font-family="Liberation Sans, sans-serif" font-weight="bold" font-style="italic" font-size="10.900" letter-spacing="-.5" fill="#00acd7" stroke="#00acd7" stroke-width=".3">GO</text></svg>
<div class="t td" style="left:1176px;top:786px;--k:0.895">Go</div>
<svg class="ic" style="left:1374px;top:786px" width="20" height="20" viewBox="0 0 20 20"><g fill="none" stroke="#f0303f" stroke-width="1.600" stroke-linecap="round" stroke-linejoin="round"><path d="M4.600 5.300h7L15.100 11.600 11.600 17.600h-7L1.600 11.200z"/><path d="M8.300.6v2.100M16.500 7.600l2-1.100"/><path d="M3.700 17.300l.2 2 2.400-1.300z" fill="#f0303f" stroke-width="1"/></g></svg>
<div class="t td" style="left:1402px;top:786px;--k:0.987">Beego</div>
<svg class="ic" style="left:1599px;top:786px" width="20" height="20" viewBox="0 0 20 20"><g fill="none" stroke="#00acd7" stroke-width=".6" stroke-linecap="round" opacity=".7"><path d="M1.200 8.500h2.400M0 9.550h4M2.400 10.500h1.700"/></g><text transform="translate(5.300 13.900) scale(.86 1)" font-family="Liberation Sans, sans-serif" font-weight="bold" font-style="italic" font-size="10.900" letter-spacing="-.5" fill="#00acd7" stroke="#00acd7" stroke-width=".3">GO</text></svg>
<div class="t td" style="left:1627px;top:786px;--k:0.895">Go</div>
<svg class="abs" style="left:1818px;top:786px" width="20" height="20" viewBox="0 0 24 24" fill="#666"><circle cx="12" cy="6" r="1.900"/><circle cx="12" cy="12" r="1.900"/><circle cx="12" cy="18" r="1.900"/></svg>
<div class="hline" style="top:829px"></div>
<svg class="abs" style="left:328px;top:855px" width="16" height="16" viewBox="0 0 16 16"><rect x="1.200" y="1.100" width="13.600" height="13.500" rx="1.400" fill="none" stroke="#616161" stroke-width="1.700"/></svg>
<svg class="abs" style="left:406px;top:851px" width="24" height="24" viewBox="0 0 24 24" fill="none" stroke="#18be94" stroke-width="1.700"><circle cx="11.600" cy="11.600" r="9.600"/><path d="M6.700 11.500l3.200 3.100 6.100-5.900" stroke-width="2" stroke-linecap="round" stroke-linejoin="round"/></svg>
<div class="t lnk" style="left:486.300px;top:853.3px;--k:1.009">recommendations-engine</div>
<div class="chip" style="left:780px;top:851px;width:81px"><span class="t" style="position:relative;display:inline-block;line-height:24px;--k:1.02">Application</span></div>
<svg class="ic" style="left:1148px;top:853px" width="20" height="20" viewBox="0 0 20 20"><path fill="#4180b3" d="M9.800.4C7.300.4 5.400 1.100 5.400 2.900v1.700h4.500v.7H3.500C1.500 5.300.4 7.200.4 10.100s1.100 4.800 3.100 4.800h1.800v-1.900c0-1.800 1.400-3.100 3.100-3.100h4c1.400 0 2.500-1.100 2.500-2.500V2.900c0-1.700-1.800-2.500-5.100-2.500z"/><circle cx="7.400" cy="2.500" r=".8" fill="#f8f9fe"/><g transform="rotate(180 10.150 10.150)"><path fill="#ffe36a" d="M9.800.4C7.300.4 5.400 1.100 5.400 2.900v1.700h4.500v.7H3.500C1.500 5.300.4 7.200.4 10.100s1.100 4.800 3.100 4.800h1.800v-1.900c0-1.800 1.400-3.100 3.100-3.100h4c1.400 0 2.500-1.100 2.500-2.500V2.900c0-1.700-1.800-2.500-5.100-2.500z"/><circle cx="7.400" cy="2.500" r=".8" fill="#f8f9fe"/></g></svg>
<div class="t td" style="left:1176px;top:853px;--k:1">Python</div>
<svg class="ic" style="left:1374px;top:853px" width="20" height="20" viewBox="0 0 20 20"><path fill="#4180b3" d="M9.800.4C7.300.4 5.400 1.100 5.400 2.900v1.700h4.500v.7H3.500C1.500 5.300.4 7.200.4 10.100s1.100 4.800 3.100 4.800h1.800v-1.900c0-1.800 1.400-3.100 3.100-3.100h4c1.400 0 2.500-1.100 2.500-2.500V2.900c0-1.700-1.800-2.500-5.100-2.500z"/><circle cx="7.400" cy="2.500" r=".8" fill="#f8f9fe"/><g transform="rotate(180 10.150 10.150)"><path fill="#ffe36a" d="M9.800.4C7.300.4 5.400 1.100 5.400 2.900v1.700h4.500v.7H3.500C1.500 5.300.4 7.200.4 10.100s1.100 4.800 3.100 4.800h1.800v-1.900c0-1.800 1.400-3.100 3.100-3.100h4c1.400 0 2.500-1.100 2.500-2.500V2.900c0-1.700-1.800-2.500-5.100-2.500z"/><circle cx="7.400" cy="2.500" r=".8" fill="#f8f9fe"/></g></svg>
<div class="t td" style="left:1402px;top:853px;--k:1">Python 3.8</div>
<svg class="ic" style="left:1599px;top:853px" width="20" height="20" viewBox="0 0 20 20"><path fill="#4180b3" d="M9.800.4C7.300.4 5.400 1.100 5.400 2.900v1.700h4.500v.7H3.500C1.500 5.300.4 7.200.4 10.100s1.100 4.800 3.100 4.800h1.800v-1.900c0-1.800 1.400-3.100 3.100-3.100h4c1.400 0 2.500-1.100 2.500-2.500V2.900c0-1.700-1.800-2.500-5.100-2.500z"/><circle cx="7.400" cy="2.500" r=".8" fill="#f8f9fe"/><g transform="rotate(180 10.150 10.150)"><path fill="#ffe36a" d="M9.800.4C7.300.4 5.400 1.100 5.400 2.900v1.700h4.500v.7H3.500C1.500 5.300.4 7.200.4 10.100s1.100 4.800 3.100 4.800h1.800v-1.900c0-1.800 1.400-3.100 3.100-3.100h4c1.400 0 2.500-1.100 2.500-2.500V2.900c0-1.700-1.800-2.500-5.100-2.500z"/><circle cx="7.400" cy="2.500" r=".8" fill="#f8f9fe"/></g></svg>
<div class="t td" style="left:1627px;top:853px;--k:1">Python</div>
<svg class="abs" style="left:1818px;top:853px" width="20" height="20" viewBox="0 0 24 24" fill="#666"><circle cx="12" cy="6" r="1.900"/><circle cx="12" cy="12" r="1.900"/><circle cx="12" cy="18" r="1.900"/></svg>
<div class="hline" style="top:896px"></div>
<svg class="abs" style="left:328px;top:922px" width="16" height="16" viewBox="0 0 16 16"><rect x="1.200" y="1.100" width="13.600" height="13.500" rx="1.400" fill="none" stroke="#616161" stroke-width="1.700"/></svg>
<svg class="abs" style="left:406px;top:918px" width="24" height="24" viewBox="0 0 24 24" fill="none" stroke="#18be94" stroke-width="1.700"><circle cx="11.600" cy="11.600" r="9.600"/><path d="M6.700 11.500l3.200 3.100 6.100-5.900" stroke-width="2" stroke-linecap="round" stroke-linejoin="round"/></svg>
<div class="t lnk" style="left:486.300px;top:920.3px;--k:1.0135">user-authentication</div>
<div class="chip" style="left:780px;top:918px;width:81px"><span class="t" style="position:relative;display:inline-block;line-height:24px;--k:1.02">Application</span></div>
<svg class="ic" style="left:1148px;top:920px" width="20" height="20" viewBox="0 0 20 20"><rect width="20" height="20" fill="#f7df1e"/><text x="18.300" y="17.850" text-anchor="end" font-family="Liberation Sans, sans-serif" font-weight="bold" font-size="11.300" letter-spacing="-.3" fill="#111" stroke="#111" stroke-width=".3">JS</text></svg>
<div class="t td" style="left:1176px;top:920px;--k:1">JavaScript</div>
<svg class="ic" style="left:1374px;top:920px" width="20" height="20" viewBox="0 0 20 20"><text transform="translate(-.9 16.200) scale(.9 1)" font-family="Liberation Sans, sans-serif" font-size="23.500" letter-spacing="-.6" fill="#222" stroke="#f8f9fe" stroke-width=".6">ex</text></svg>
<div class="t td" style="left:1402px;top:920px;--k:1">Express</div>
<svg class="ic" style="left:1599px;top:920px" width="20" height="20" viewBox="0 0 20 20"><path d="M0 6h20v7H10v1.100H5.600V13H0z" fill="#cb3837"/><rect x="1.100" y="7.100" width="17.800" height="4.800" fill="#fff"/><text x="10" y="11.600" text-anchor="middle" font-family="Liberation Sans, sans-serif" font-weight="bold" font-size="7" letter-spacing=".4" fill="#cb3837">npm</text></svg>
<div class="t td" style="left:1627px;top:920px;--k:1">NPM</div>
<svg class="abs" style="left:1818px;top:920px" width="20" height="20" viewBox="0 0 24 24" fill="#666"><circle cx="12" cy="6" r="1.900"/><circle cx="12" cy="12" r="1.900"/><circle cx="12" cy="18" r="1.900"/></svg>
<div class="hline" style="top:963px;left:299px;width:1562px"></div>

<!-- PAGINATION -->
<div class="t td" style="left:1523.800px;top:980px;--k:.989">Rows per page:</div>
<div class="t td" style="left:1637px;top:979px">15</div>
<svg class="abs" style="left:1659px;top:988px" width="10" height="5" viewBox="0 0 10 5"><path d="M0 0h10L5 5z" fill="#757575"/></svg>
<div class="t td" style="left:1708px;top:980px;--k:1.034">1–7 of 7</div>
<svg class="abs" style="left:1789px;top:978px" width="24" height="24" viewBox="0 0 24 24"><path fill="#bdbdbd" d="M15.410 7.410 14 6l-6 6 6 6 1.410-1.410L10.830 12z"/></svg>
<svg class="abs" style="left:1829px;top:978px" width="24" height="24" viewBox="0 0 24 24"><path fill="#bdbdbd" d="M8.590 16.590 10 18l6-6-6-6-1.410 1.410L13.170 12z"/></svg>

<div class="hl"></div>

<div class="frame"></div>
</div>
</body>
</html>
